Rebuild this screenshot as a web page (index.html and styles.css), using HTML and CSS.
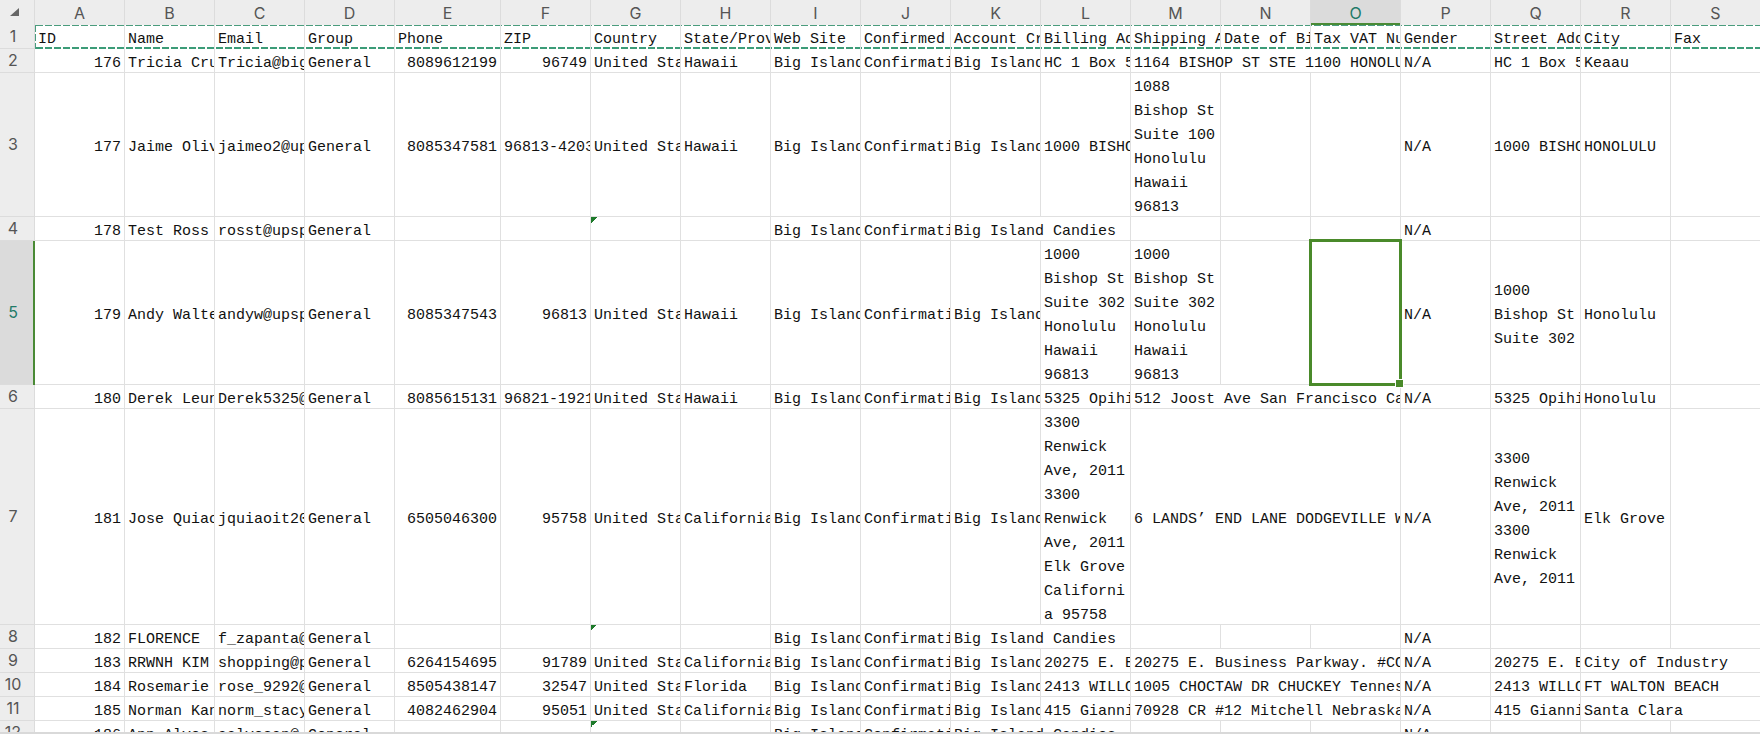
FILE: index.html
```
<!DOCTYPE html>
<html lang="en">
<head>
  <meta charset="UTF-8" />
  <title>Customers</title>
  <meta name="viewport" content="width=device-width, initial-scale=1.0" />
  <link rel="stylesheet" href="styles.css">
</head>
<body>

  <div class="sheet">
    <table class="grid">
      <colgroup>
        <col class="col-index">
        <col span="4">
        <col class="col-phone">
        <col span="14">
      </colgroup>
      <thead>
        <tr>
          <th class="corner"><svg width="9" height="9" viewBox="0 0 9 9"><path d="M9 0V8H0Z" fill="#666"/></svg></th>
          <th>A</th><th>B</th><th>C</th><th>D</th><th>E</th><th>F</th><th>G</th><th>H</th><th>I</th><th>J</th><th>K</th><th>L</th><th>M</th><th>N</th><th class="active">O</th><th>P</th><th>Q</th><th>R</th><th>S</th>
        </tr>
      </thead>
      <tbody>
        <!-- Field names, marked as copied -->
        <tr class="copied">
          <th>1</th>
          <td>ID</td><td>Name</td><td>Email</td><td>Group</td><td>Phone</td><td>ZIP</td><td>Country</td><td>State/Prov</td><td>Web Site</td><td>Confirmed</td><td>Account Cr</td><td>Billing Ad</td><td>Shipping A</td><td>Date of Bi</td><td>Tax VAT Nu</td><td>Gender</td><td>Street Add</td><td>City</td><td>Fax</td>
        </tr>
        <tr>
          <th>2</th>
          <td class="num">176</td><td>Tricia Cru</td><td>Tricia@big</td><td>General</td><td class="num">8089612199</td><td class="num">96749</td><td>United Sta</td><td>Hawaii</td><td>Big Island</td><td>Confirmati</td><td>Big Island</td><td>HC 1 Box 5</td><td colspan="3">1164 BISHOP ST STE 1100 HONOLU</td><td>N/A</td><td>HC 1 Box 5</td><td>Keaau</td><td></td>
        </tr>
        <tr>
          <th>3</th>
          <td class="num">177</td><td>Jaime Oliv</td><td>jaimeo2@up</td><td>General</td><td class="num">8085347581</td><td>96813-4203</td><td>United Sta</td><td>Hawaii</td><td>Big Island</td><td>Confirmati</td><td>Big Island</td><td>1000 BISHO</td><td class="wrap"><div>1088 Bishop St Suite 100 Honolulu Hawaii 96813</div></td><td></td><td></td><td>N/A</td><td>1000 BISHO</td><td>HONOLULU</td><td></td>
        </tr>
        <tr>
          <th>4</th>
          <td class="num">178</td><td>Test Ross</td><td>rosst@upsp</td><td>General</td><td></td><td></td><td class="flag"></td><td></td><td>Big Island</td><td>Confirmati</td><td colspan="2">Big Island Candies</td><td></td><td></td><td></td><td>N/A</td><td></td><td></td><td></td>
        </tr>
        <tr class="active-row">
          <th>5</th>
          <td class="num">179</td><td>Andy Walte</td><td>andyw@upsp</td><td>General</td><td class="num">8085347543</td><td class="num">96813</td><td>United Sta</td><td>Hawaii</td><td>Big Island</td><td>Confirmati</td><td>Big Island</td><td class="wrap"><div>1000 Bishop St Suite 302 Honolulu Hawaii 96813</div></td><td class="wrap"><div>1000 Bishop St Suite 302 Honolulu Hawaii 96813</div></td><td></td><td class="selected"></td><td>N/A</td><td class="wrap"><div>1000 Bishop St Suite 302</div></td><td>Honolulu</td><td></td>
        </tr>
        <tr>
          <th>6</th>
          <td class="num">180</td><td>Derek Leun</td><td>Derek5325@</td><td>General</td><td class="num">8085615131</td><td>96821-1921</td><td>United Sta</td><td>Hawaii</td><td>Big Island</td><td>Confirmati</td><td>Big Island</td><td>5325 Opihi</td><td colspan="3">512 Joost Ave San Francisco Ca</td><td>N/A</td><td>5325 Opihi</td><td>Honolulu</td><td></td>
        </tr>
        <tr>
          <th>7</th>
          <td class="num">181</td><td>Jose Quiao</td><td>jquiaoit20</td><td>General</td><td class="num">6505046300</td><td class="num">95758</td><td>United Sta</td><td>California</td><td>Big Island</td><td>Confirmati</td><td>Big Island</td><td class="wrap"><div>3300 Renwick Ave, 2011 3300 Renwick Ave, 2011 Elk Grove California 95758</div></td><td colspan="3">6 LANDS’ END LANE DODGEVILLE W</td><td>N/A</td><td class="wrap"><div>3300 Renwick Ave, 2011 3300 Renwick Ave, 2011</div></td><td>Elk Grove</td><td></td>
        </tr>
        <tr>
          <th>8</th>
          <td class="num">182</td><td>FLORENCE</td><td>f_zapanta@</td><td>General</td><td></td><td></td><td class="flag"></td><td></td><td>Big Island</td><td>Confirmati</td><td colspan="2">Big Island Candies</td><td></td><td></td><td></td><td>N/A</td><td></td><td></td><td></td>
        </tr>
        <tr>
          <th>9</th>
          <td class="num">183</td><td>RRWNH KIM</td><td>shopping@p</td><td>General</td><td class="num">6264154695</td><td class="num">91789</td><td>United Sta</td><td>California</td><td>Big Island</td><td>Confirmati</td><td>Big Island</td><td>20275 E. B</td><td colspan="3">20275 E. Business Parkway. #CO</td><td>N/A</td><td>20275 E. B</td><td colspan="2">City of Industry</td>
        </tr>
        <tr>
          <th>10</th>
          <td class="num">184</td><td>Rosemarie</td><td>rose_9292@</td><td>General</td><td class="num">8505438147</td><td class="num">32547</td><td>United Sta</td><td>Florida</td><td>Big Island</td><td>Confirmati</td><td>Big Island</td><td>2413 WILLO</td><td colspan="3">1005 CHOCTAW DR CHUCKEY Tennes</td><td>N/A</td><td>2413 WILLO</td><td colspan="2">FT WALTON BEACH</td>
        </tr>
        <tr>
          <th>11</th>
          <td class="num">185</td><td>Norman Kan</td><td>norm_stacy</td><td>General</td><td class="num">4082462904</td><td class="num">95051</td><td>United Sta</td><td>California</td><td>Big Island</td><td>Confirmati</td><td>Big Island</td><td>415 Gianni</td><td colspan="3">70928 CR #12 Mitchell Nebraska</td><td>N/A</td><td>415 Gianni</td><td colspan="2">Santa Clara</td>
        </tr>
        <tr>
          <th>12</th>
          <td class="num">186</td><td>Ann Alves</td><td>aalvesan@</td><td>General</td><td></td><td></td><td class="flag"></td><td></td><td>Big Island</td><td>Confirmati</td><td colspan="2">Big Island Candies</td><td></td><td></td><td></td><td>N/A</td><td></td><td></td><td></td>
        </tr>
      </tbody>
    </table>
  </div>

  <!-- Edge of the tab bar -->
  <div class="bottom-edge"></div>

</body>
</html>
```
FILE: styles.css
```
* {
  box-sizing: border-box;
  margin: 0;
  padding: 0;
}
body {
  display: flex;
  flex-direction: column;
  height: 100vh;
  background: #fff;
  color: #111;
  font-family: "Liberation Mono", monospace;
  font-size: 15px;
}

.sheet {
  flex: 1;
  min-height: 0;
  overflow: hidden;
}
.bottom-edge {
  height: 2px;
  background: #d9d9d9;
}

/* Grid, last column line runs off the right edge */
.grid {
  width: calc(100% + 1px);
  min-width: 1200px;
  table-layout: fixed;
  border-collapse: separate;
  border-spacing: 0;
}
.col-index {
  width: 35px;
}
.col-phone {
  width: 106px;
}

/* Column letters and row numbers */
th {
  background: #ededed;
  color: #555;
  font-family: Inter, sans-serif;
  font-size: 16px;
  font-weight: 400;
  line-height: 24px;
  border-right: 1px solid #dcdcdc;
}
thead th {
  height: 25px;
}
thead th.active {
  background: #dbdbdb;
  color: #217a68;
  box-shadow: inset 0 -2px #4a8a35;
}
tbody th {
  padding: 0 8px 2px 0;
  line-height: 22px;
  box-shadow: inset 0 -1px #dcdcdc;
}
.active-row th {
  background: #dbdbdb;
  color: #217a68;
  padding-right: 7px;
  border-right: 2px solid #4a8a35;
}
.corner {
  padding: 0 6px 0 0;
  line-height: 0;
}

/* Cells */
td {
  height: 24px;
  padding: 6px 0 0 3px;
  line-height: 18px;
  white-space: nowrap;
  overflow: hidden;
  vertical-align: middle;
  border-right: 1px solid #e0e0e0;
  box-shadow: inset 0 -1px #e0e0e0;
}
.num {
  padding-right: 3px;
  text-align: right;
}

/* Multi-line addresses, text sits low in its line */
.wrap {
  padding-top: 0;
  line-height: 24px;
  white-space: normal;
  overflow-wrap: break-word;
}
.wrap div {
  margin: 3px 0 -3px;
}

/* Dashed outline round the copied row */
.copied {
  background:
    repeating-linear-gradient(90deg, #4a9c7d 0 7px, transparent 7px 9px) 0 0 / 100% 1px no-repeat,
    repeating-linear-gradient(90deg, #3c9c78 0 7px, transparent 7px 9px) 0 100% / 100% 2px no-repeat;
}
.copied td {
  box-shadow: none;
}
.copied td:nth-child(2) {
  background: repeating-linear-gradient(#4a9c7d 0 7px, transparent 7px 9px) 0 0 / 1px 100% no-repeat;
}

/* Green corner mark */
.flag {
  background: linear-gradient(135deg, #1d7a2a 50%, transparent 50%) 0 0 / 6px 6px no-repeat;
}

/* Current cell */
.selected {
  position: relative;
  overflow: visible;
}
.selected::before {
  content: "";
  position: absolute;
  inset: -2px -2px -1px -2px;
  border: 3px solid #4a8a2a;
}
.selected::after {
  content: "";
  position: absolute;
  right: -4px;
  bottom: -3px;
  width: 7px;
  height: 7px;
  background: #4a8a2a;
  border: 1px solid #fff;
}
```
